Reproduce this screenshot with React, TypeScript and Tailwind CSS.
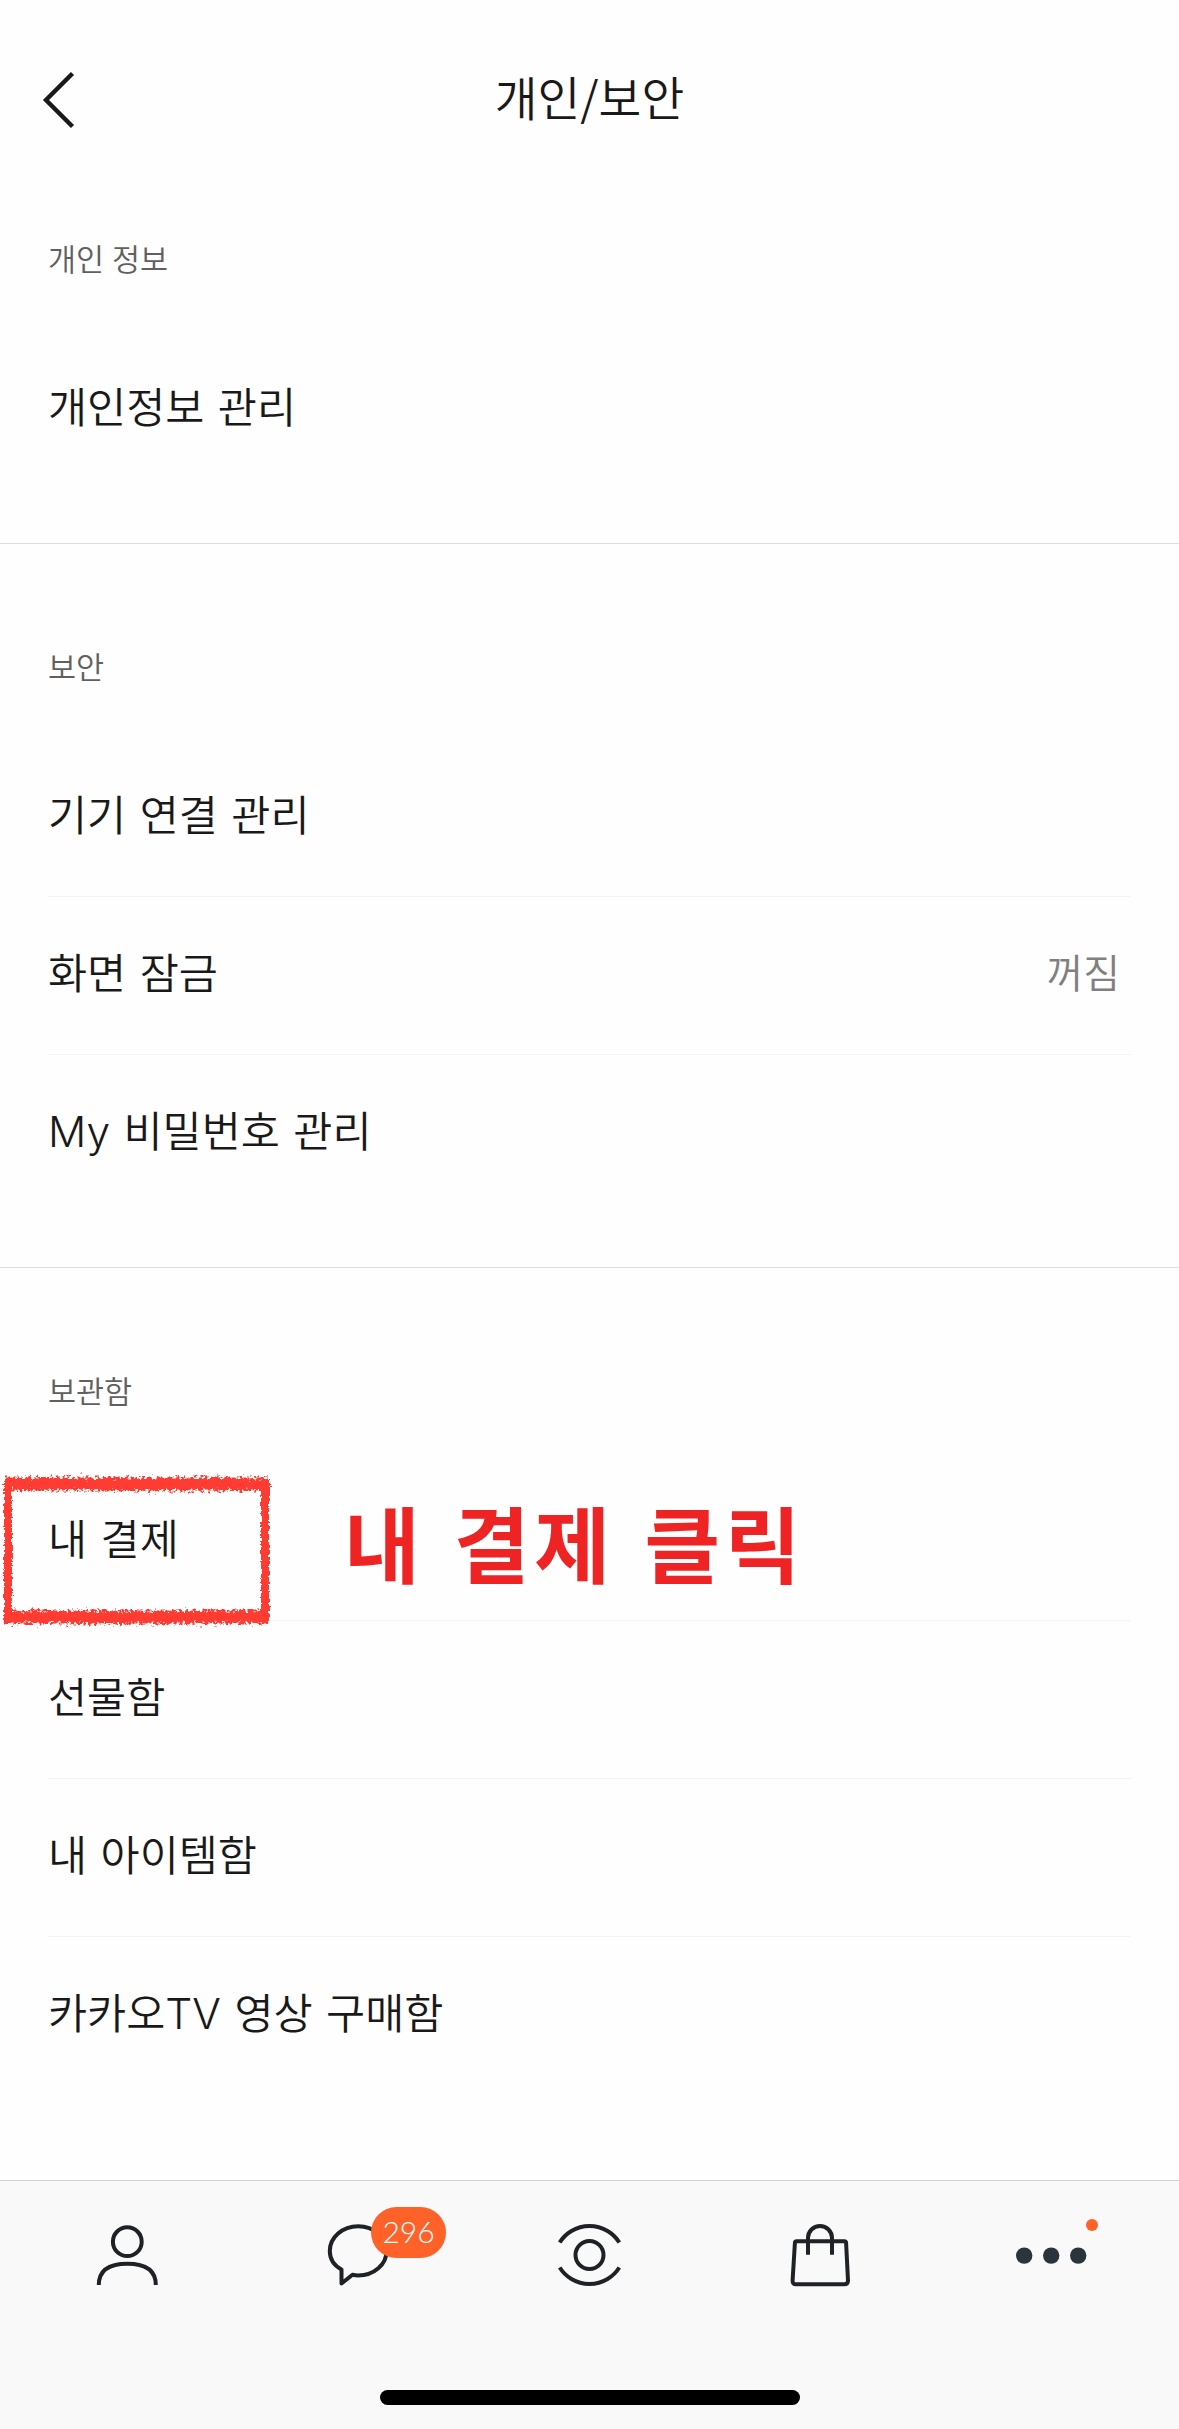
import { ReactNode } from 'react';
import { clsx } from 'clsx';

interface Item {
	label: string;
	value?: string;
}

interface SectionProps {
	title: string;
	items: Item[];
	first?: boolean;
	last?: boolean;
	children?: ReactNode;
}

const Section = ({ title, items, first, last, children }: SectionProps) => {
	return (
		<section className={clsx('relative', !last && 'border-b border-[#dcdcdc] pb-[54px]')}>
			<h2
				className={clsx(
					'px-12 pb-[53px] text-[30.5px] leading-[40px] font-[350] text-[#606060] [word-spacing:1px]',
					first ? 'pt-[37px]' : 'pt-[102px]',
				)}
			>
				{title}
			</h2>
			<ul className="mx-12">
				{items.map((item, index) => (
					<li
						key={item.label}
						className={clsx(
							"flex h-[158px] items-center justify-between pr-[11px] pb-[4px] font-['Inter','Noto_Sans_CJK_KR',sans-serif] text-[42.5px] font-[350] text-[#191919] [word-spacing:1.5px]",
							index < items.length - 1 && 'border-b border-[#f3f3f3]',
						)}
					>
						<span>{item.label}</span>
						{item.value && <span className="text-[40px] text-[#808080]">{item.value}</span>}
					</li>
				))}
			</ul>
			{children}
		</section>
	);
};

// rough crayon frame around a menu row
const CrayonFrame = () => {
	return (
		<svg className="absolute top-[198px] left-0" width="280" height="172" viewBox="0 0 280 172" fill="none">
			<filter id="crayon" x="0" y="0" width="280" height="172" filterUnits="userSpaceOnUse">
				<feTurbulence type="fractalNoise" baseFrequency="0.35" numOctaves="3" seed="4" result="noise" />
				<feDisplacementMap in="SourceGraphic" in2="noise" scale="11" xChannelSelector="R" yChannelSelector="G" />
				<feGaussianBlur stdDeviation="0.6" />
			</filter>
			<filter id="crayon-thin" x="0" y="0" width="280" height="172" filterUnits="userSpaceOnUse">
				<feTurbulence type="fractalNoise" baseFrequency="0.35" numOctaves="3" seed="9" result="noise" />
				<feDisplacementMap in="SourceGraphic" in2="noise" scale="5" xChannelSelector="R" yChannelSelector="G" />
				<feGaussianBlur stdDeviation="0.6" />
			</filter>
			<g stroke="#ff3b30">
				<path d="M5 18H268M5 151H268" strokeWidth="13" filter="url(#crayon)" />
				<path d="M8 14V156M265 14V156" strokeWidth="8" filter="url(#crayon-thin)" />
			</g>
		</svg>
	);
};

const TabIcon = ({ children }: { children: ReactNode }) => {
	return (
		<svg width="64" height="64" viewBox="0 0 64 64" fill="none" stroke="#1e2226" strokeWidth="4">
			{children}
		</svg>
	);
};

const Tab = ({ children }: { children: ReactNode }) => {
	return (
		<a className="flex flex-1 justify-center">
			<div className="relative">{children}</div>
		</a>
	);
};

const TabBar = () => {
	return (
		<nav className="flex h-[249px] flex-col items-center justify-between border-t border-[#d1d1d1] bg-[#f9f9f9] pb-6">
			<div className="flex w-full px-3 pt-[42px]">
				<Tab>
					<TabIcon>
						<circle cx="31.3" cy="18.7" r="14.4" />
						<path d="M2.8 62C2.8 47 14 40.7 31.3 40.7S59.8 47 59.8 62" />
					</TabIcon>
				</Tab>
				<Tab>
					<TabIcon>
						<path
							d="M14.5 46.5V60.5L25.5 51.7C27.5 52.3 29.5 52.5 31.2 52.5C47 52.5 59.6 41.5 59.6 28S47 3.3 31.2 3.3S2.8 14.5 2.8 28C2.8 36 7 42.5 14.5 46.5Z"
							strokeLinejoin="round"
						/>
					</TabIcon>
					<span className="absolute -top-4 left-[44.5px] flex h-[51px] w-[75px] items-center justify-center rounded-full bg-[#ff6229] pb-[3px] font-[Lato] text-[30px] font-light text-white">
						296
					</span>
				</Tab>
				<Tab>
					<TabIcon>
						<circle cx="31.5" cy="32" r="14" />
						<path d="M1.7 19.5A35.2 35.2 0 0 1 61.3 19.5M1.7 44.5A35.2 35.2 0 0 0 61.3 44.5" />
					</TabIcon>
				</Tab>
				<Tab>
					<TabIcon>
						<path d="M7.5 18.3H55.5Q57 18.3 57.1 20L59 57.5Q59 61.3 55.5 61.3H7Q3.5 61.3 3.6 57.5L5.9 20Q6 18.3 7.5 18.3Z" />
						<path d="M19 31.7V15A12 12 0 0 1 43 15V31.7" />
					</TabIcon>
				</Tab>
				<Tab>
					<svg width="64" height="64" viewBox="0 0 64 64" fill="#2b343b" className="overflow-visible">
						<circle cx="4.2" cy="32.6" r="8.2" />
						<circle cx="31.2" cy="32.6" r="8.2" />
						<circle cx="58.2" cy="32.6" r="8.2" />
					</svg>
					<span className="absolute -top-1 left-[66.5px] size-3 rounded-full bg-[#ff6229]" />
				</Tab>
			</div>
			<div className="h-[15px] w-[420px] rounded-full bg-black" />
		</nav>
	);
};

export default function App() {
	return (
		<div className="flex h-[2429px] w-[1179px] flex-col justify-between overflow-hidden bg-[#fefefe] font-['Noto_Sans_CJK_KR',sans-serif]">
			<main>
				<header className="grid h-[201px] grid-cols-[1fr_auto_1fr] items-center px-[42px] pb-[2px] text-[#191919]">
					<svg width="34" height="58" viewBox="0 0 34 58" fill="none" stroke="currentColor" strokeWidth="4.4">
						<path d="M30.5 2.5L4 29L30.5 55.5" />
					</svg>
					<h1 className="pb-[7px] text-[46.5px] font-[350]">개인/보안</h1>
				</header>
				<Section first title="개인 정보" items={[{ label: '개인정보 관리' }]} />
				<Section
					title="보안"
					items={[{ label: '기기 연결 관리' }, { label: '화면 잠금', value: '꺼짐' }, { label: 'My 비밀번호 관리' }]}
				/>
				<Section
					last
					title="보관함"
					items={[
						{ label: '내 결제' },
						{ label: '선물함' },
						{ label: '내 아이템함' },
						{ label: '카카오TV 영상 구매함' },
					]}
				>
					<CrayonFrame />
					<strong className="absolute top-[213px] left-[344px] text-[82.5px] leading-[120px] font-bold tracking-[4.6px] whitespace-nowrap text-[#ee2424] [word-spacing:6px]">
						내 결제 클릭
					</strong>
				</Section>
			</main>
			<TabBar />
		</div>
	);
}
